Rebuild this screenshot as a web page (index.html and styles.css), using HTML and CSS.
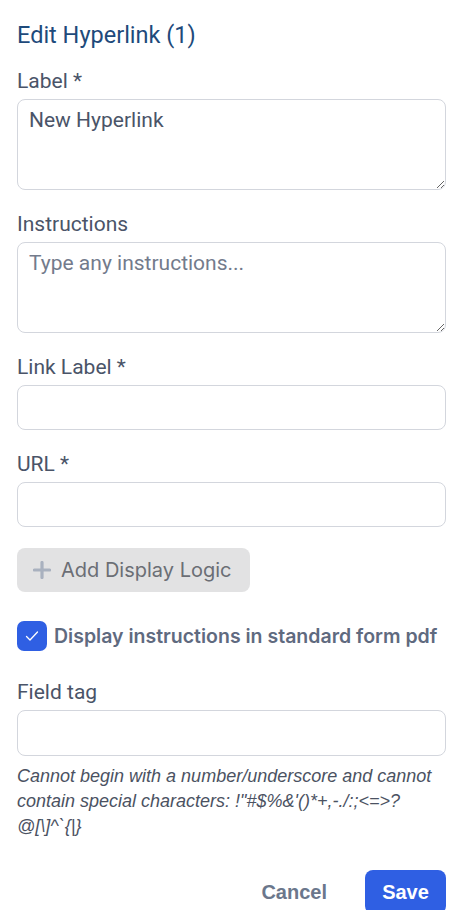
FILE: index.html
```html
<!DOCTYPE html>
<html lang="en">
<head>
<meta charset="utf-8">
<title>Edit Hyperlink</title>
<link rel="stylesheet" href="styles.css">
</head>
<body>
<div class="panel">
  <h2 class="title">Edit Hyperlink (1)</h2>

  <div class="field">
    <label class="label">Label *</label>
    <textarea class="area">New Hyperlink</textarea>
  </div>

  <div class="field">
    <label class="label">Instructions</label>
    <textarea class="area" placeholder="Type any instructions..."></textarea>
  </div>

  <div class="field">
    <label class="label">Link Label *</label>
    <input class="input" type="text">
  </div>

  <div class="field">
    <label class="label">URL *</label>
    <input class="input" type="text">
  </div>

  <button class="logic-btn" type="button">
    <svg class="plus" width="18" height="18" viewBox="0 0 18 18"><path d="M9 1.5v15M1.5 9h15" stroke="#a9b1bf" stroke-width="3.2" stroke-linecap="round" fill="none"/></svg>
    <span>Add Display Logic</span>
  </button>

  <div class="check-row">
    <span class="checkbox">
      <svg width="16" height="16" viewBox="0 0 16 16"><path d="M2.5 8.5l3.5 3.5 7.5-8" stroke="#fff" stroke-width="1.3" fill="none" stroke-linecap="round" stroke-linejoin="round"/></svg>
    </span>
    <span class="check-label">Display instructions in standard form pdf</span>
  </div>

  <div class="field tag-field">
    <label class="label">Field tag</label>
    <input class="input tag" type="text">
    <p class="help">Cannot begin with a number/underscore and cannot contain special characters: !"#$%&amp;'()*+,-./:;&lt;=&gt;?@[\]^`{|}</p>
  </div>

  <div class="actions">
    <button class="cancel" type="button">Cancel</button>
    <button class="save" type="button">Save</button>
  </div>
</div>
</body>
</html>
```
FILE: styles.css
```css
* { box-sizing: border-box; }
html, body { margin: 0; padding: 0; background: #fff; }
body { font-family: Roboto, "Liberation Sans", sans-serif; }

.panel {
  width: 466px;
  padding: 21px 20px 0 17px;
  display: flex;
  flex-direction: column;
}

.title {
  margin: 0;
  font-size: 23.5px;
  line-height: 28px;
  font-weight: 400;
  color: #1e4a7b;
}

.field {
  display: flex;
  flex-direction: column;
  margin-top: 22px;
}
.title + .field { margin-top: 20px; }

.label {
  font-size: 21px;
  line-height: 25px;
  color: #4a5468;
  margin-bottom: 5px;
}

.area {
  width: 429px;
  height: 91px;
  border: 1px solid #d3d6dd;
  border-radius: 8px;
  padding: 8px 11px;
  font-family: Roboto, sans-serif;
  font-size: 21px;
  line-height: 25px;
  color: #4a5468;
  resize: vertical;
  outline: none;
}
.area::placeholder { color: #737b8c; }

.input {
  width: 429px;
  height: 45px;
  border: 1px solid #d3d6dd;
  border-radius: 8px;
  padding: 0 11px;
  font-family: Roboto, sans-serif;
  font-size: 21px;
  outline: none;
}
.input.tag { height: 46px; }

.logic-btn {
  margin-top: 21px;
  align-self: flex-start;
  width: 233px;
  height: 44px;
  border: none;
  border-radius: 8px;
  background: #e2e2e3;
  display: flex;
  align-items: center;
  gap: 10px;
  padding: 0 0 0 16px;
  font-family: Inter, "Liberation Sans", sans-serif;
  font-size: 20px;
  color: #6b6e75;
}

.check-row {
  margin-top: 29px;
  display: flex;
  align-items: center;
  gap: 7px;
}
.checkbox {
  flex: none;
  width: 30px;
  height: 30px;
  border-radius: 7px;
  background: #2f5fe3;
  display: flex;
  align-items: center;
  justify-content: center;
}
.check-label {
  font-family: Inter, "Liberation Sans", sans-serif;
  font-weight: 600;
  font-size: 19.5px;
  color: #5f6a7f;
  white-space: nowrap;
}

.tag-field { margin-top: 29px; }

.help {
  margin: 8px 0 0;
  font-family: "Liberation Sans", Arial, sans-serif;
  font-style: italic;
  font-size: 18px;
  line-height: 25px;
  color: #4b5262;
}

.actions {
  margin-top: 31px;
  display: flex;
  justify-content: flex-end;
  align-items: center;
  gap: 38px;
}
.cancel {
  border: none;
  background: none;
  padding: 0;
  font-family: "Liberation Sans", Arial, sans-serif;
  font-weight: 700;
  font-size: 20px;
  color: #6b778c;
}
.save {
  width: 81px;
  height: 44px;
  border: none;
  border-radius: 8px;
  background: #2f5fe3;
  color: #fff;
  font-family: "Liberation Sans", Arial, sans-serif;
  font-weight: 700;
  font-size: 20px;
}
```
